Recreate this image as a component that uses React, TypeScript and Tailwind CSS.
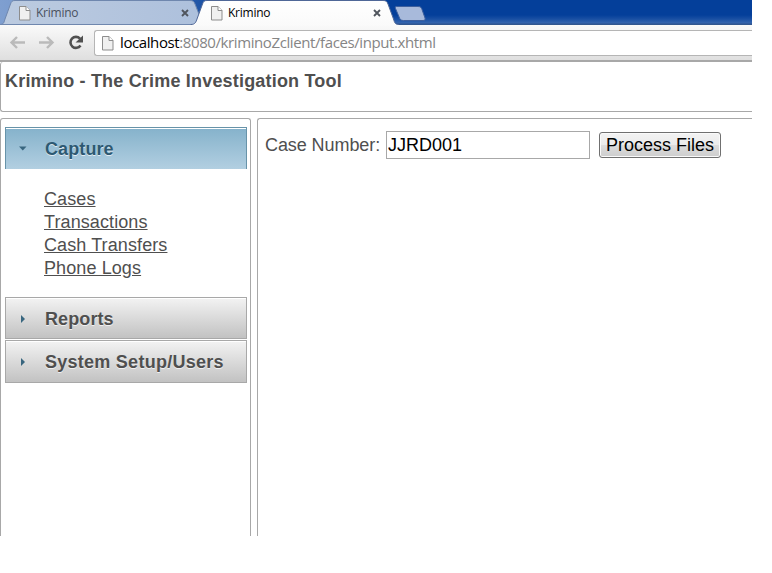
import React from 'react';

const PageIcon = ({ className = '' }: { className?: string }) => (
  <svg className={`shrink-0 ${className}`} width="12" height="15" viewBox="0 0 12 15">
    <path d="M.5.5h6.500l4 4v9.500H.5z" fill="#f0f0f0" stroke="#8d8d8d" />
    <path d="M7 .5v4h4" fill="#fff" stroke="#8d8d8d" />
  </svg>
);

const CloseIcon = () => (
  <svg className="shrink-0" width="8" height="8" viewBox="0 0 8 8">
    <path d="M1 1l6 6M7 1L1 7" stroke="#50555d" strokeWidth="1.9" />
  </svg>
);

function TabStrip() {
  return (
    <div className="relative h-[25px] shrink-0 bg-[linear-gradient(to_bottom,#043f9a_0px,#043f9a_15px,#194fa3_19px,#3565ae_23px,#2d528f_24px)]">
      <svg className="absolute inset-0" width="752" height="25" viewBox="0 0 752 25">
        <defs>
          <linearGradient id="glow" x1="0" x2="1">
            <stop offset="0" stopColor="#7f9fd0" />
            <stop offset=".5" stopColor="#5f88c6" />
            <stop offset="1" stopColor="#043f9a" />
          </linearGradient>
          <linearGradient id="idle" x1="0" x2="1" y1="0" y2="0">
            <stop offset="0" stopColor="#bccbe0" />
            <stop offset="1" stopColor="#adc0dc" />
          </linearGradient>
          <linearGradient id="front" x1="0" x2="0" y1="0" y2="1">
            <stop offset="0" stopColor="#ffffff" />
            <stop offset="1" stopColor="#fafafa" />
          </linearGradient>
        </defs>
        <rect width="235" height="25" fill="url(#glow)" />
        <path d="M0 24.500C4 24.500 4 22 5 19L10.500 4C11.500 1.500 12 .5 15 .5H190C193 .5 194 1.500 195 4L203 24.500Z" fill="url(#idle)" stroke="#6f87ae" />
        <path d="M191 24.500C195 24.500 196 22 197 19L202.500 4C203.500 1.500 204 .5 207 .5H383C386 .5 387 1.500 388 4L393.500 19C394.500 22.500 395 24.500 399 24.500V26H191Z" fill="url(#front)" stroke="#4f6797" />
        <path d="M399 24.500H752" stroke="#31578f" />
        <path d="M396.500 6.500H418C421 6.500 421.500 8 422 9.500L425 18C425.500 19.500 425 20.500 423 20.500H403.500C401 20.500 400 19.500 399.500 18L395.500 8.500C395 7 395.500 6.500 396.500 6.500Z" fill="#a8badb" stroke="#3d5f9d" />
      </svg>
      <div className="relative flex h-full items-center pt-px font-['Open_Sans',sans-serif] text-[12px]">
        <div className="flex w-[192px] items-center pr-[3px] pl-[19px] text-[#4a515e]">
          <PageIcon />
          <span className="ml-[5px] flex-1 leading-4 tracking-[-0.25px]">Krimino</span>
          <CloseIcon />
        </div>
        <div className="flex w-[192px] items-center pr-[3px] pl-[19px] text-black">
          <PageIcon />
          <span className="ml-[5px] flex-1 leading-4 tracking-[-0.25px]">Krimino</span>
          <CloseIcon />
        </div>
      </div>
    </div>
  );
}

function Toolbar() {
  return (
    <div className="flex h-[37px] shrink-0 border-b-2 border-[#a8a8a8] bg-linear-to-b from-[#fafafa] to-[#dfdfdf] pt-[5px]">
      <div className="flex w-[94px] shrink-0 pt-[5px] pl-[9px]">
        <svg width="80" height="17" viewBox="0 0 80 17" fill="none">
          <g stroke="#bababa" strokeWidth="2.400">
            <path d="M16 7.500H2.500M8 2L2.500 7.500L8 13" />
            <path d="M30 7.500H43.500M38 2L43.500 7.500L38 13" />
          </g>
          <path d="M71 3.600A5.500 5.500 0 1 0 71.500 10.500" stroke="#505050" strokeWidth="2.600" />
          <path d="M74 .5V7.500H66.500Z" fill="#505050" />
        </svg>
      </div>
      <div className="flex h-[26px] flex-1 items-center rounded-l-[3px] border border-r-0 border-[#b5b5b5] bg-white pl-[7px]">
        <PageIcon />
        <span className="ml-[6px] pb-[2px] font-['Open_Sans',sans-serif] text-[15px] leading-5 tracking-[-0.4px] whitespace-nowrap text-[#858585]">
          <span className="text-black">localhost</span>:8080/kriminoZclient/faces/input.xhtml
        </span>
      </div>
    </div>
  );
}

function AccordionHeader({ title, open = false }: { title: string; open?: boolean }) {
  return (
    <div
      className={
        open
          ? 'flex h-[42px] items-center border border-b-0 border-[#6793a9] bg-linear-to-b from-[#85b2cb] to-[#b2cfe1] text-[#2d5972] shadow-[inset_0_1px_0_#fff]'
          : 'flex h-[42px] items-center border border-[#a8a8a8] bg-linear-to-b from-[#f3f3f3] to-[#c2c2c2] pt-[2px] text-[#4f4f4f] shadow-[inset_0_1px_0_#fff] last:h-[43px] last:pt-0 last:tracking-[0.26px]'
      }
    >
      <svg className="ml-[13px] shrink-0" width="8" height="8" viewBox="0 0 8 8">
        <path d={open ? 'M0 1.500H7.500L3.750 5.500Z' : 'M2 0L6 4L2 8Z'} fill="#38667f" />
      </svg>
      <span className="ml-[18px] text-[18px] leading-6 font-bold [text-shadow:0_1px_0_rgba(255,255,255,0.7)]">{title}</span>
    </div>
  );
}

export default function App() {
  return (
    <div className="h-[573px] w-[772px] overflow-hidden bg-white">
      <div className="flex h-[536px] w-[752px] flex-col overflow-hidden font-['Liberation_Sans',Arial,sans-serif] text-[18px] text-[#4f4f4f]">
        <TabStrip />
        <Toolbar />
        <header className="h-[50px] shrink-0 rounded-l-[3px] border border-t-0 border-r-0 border-[#a8a8a8] pt-[7px] pl-1 leading-6 font-bold tracking-[0.19px]">
          Krimino - The Crime Investigation Tool
        </header>
        <div className="mt-[6px] flex min-h-0 flex-1 gap-[6px]">
          <aside className="w-[251px] shrink-0 rounded-t-[3px] border border-b-0 border-[#a8a8a8] pt-[8px] pr-[3px] pl-[4px] tracking-[0.1px]">
            <AccordionHeader title="Capture" open />
            <nav className="flex h-[128px] flex-col items-start pt-[19px] pl-[39px] leading-[23px]">
              {['Cases', 'Transactions', 'Cash Transfers', 'Phone Logs'].map((label) => (
                <a key={label} href="#" className="underline">
                  {label}
                </a>
              ))}
            </nav>
            <div className="flex flex-col gap-px">
              <AccordionHeader title="Reports" />
              <AccordionHeader title="System Setup/Users" />
            </div>
          </aside>
          <main className="flex-1 rounded-tl-[3px] border border-r-0 border-b-0 border-[#a8a8a8] pt-[12px] pl-[7px]">
            <div className="flex items-center">
              <label htmlFor="case" className="w-[121px] tracking-[-0.08px] whitespace-nowrap">
                Case Number:
              </label>
              <input id="case" defaultValue="JJRD001" className="h-[28px] w-[204px] border border-[#a8a8a8] pl-px text-black" />
              <button className="ml-[9px] h-[26px] w-[122px] rounded-[3px] border border-[#707070] bg-[linear-gradient(to_bottom,#f3f3f3,#ebebeb_48%,#dddddd_50%,#cdcdcd)] text-center leading-6 whitespace-nowrap text-black shadow-[inset_0_0_0_1px_#fafafa]">
                Process Files
              </button>
            </div>
          </main>
        </div>
      </div>
    </div>
  );
}
